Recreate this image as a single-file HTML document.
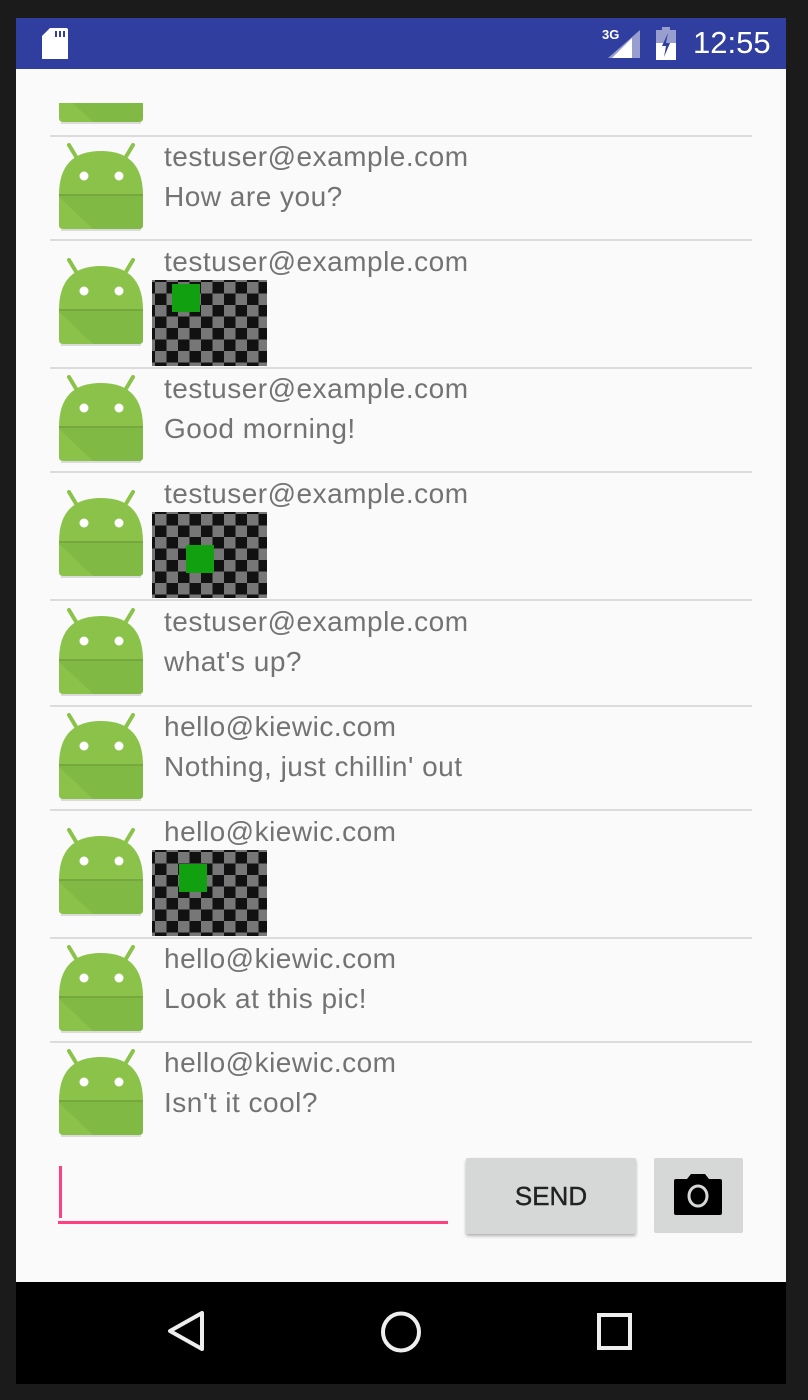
<!DOCTYPE html>
<html><head><meta charset="utf-8"><style>
*{margin:0;padding:0;box-sizing:border-box}
body{width:808px;height:1400px;background:#1b1b1b;position:relative;overflow:hidden;font-family:"Liberation Sans",sans-serif}
.screen{position:absolute;left:16px;top:18px;width:770px;height:1366px;background:#fafafa;overflow:hidden}
.status{position:absolute;left:0;top:0;width:770px;height:51px;background:#303f9f}
.nav{position:absolute;left:0;top:1264px;width:770px;height:102px;background:#000}
.list{position:absolute;left:0;top:85px;width:770px;height:1060px;overflow:hidden}
.av{position:absolute;left:43px;width:84px;height:88px}
.div{position:absolute;left:34px;width:702px;height:2px;background:#dcdcdc}
.t{position:absolute;left:148px;font-size:28px;letter-spacing:0.5px;color:#737373;white-space:nowrap;line-height:30px}
.img{position:absolute;left:136px;width:115px;height:86px;background-color:#777;
background-image:conic-gradient(#111 0 25%,#777 0 50%,#111 0 75%,#777 0);background-size:23px 23px;background-position:3px 2px}
.g{position:absolute;width:28px;height:28px;background:#10a010}
</style></head><body>
<svg width="0" height="0" style="position:absolute"><defs>
<g id="andy">
<path d="M10 2 L19 17" stroke="#8bc34a" stroke-width="4" stroke-linecap="round"/>
<path d="M74 2 L65 17" stroke="#8bc34a" stroke-width="4" stroke-linecap="round"/>
<path d="M0 52 Q0 8 42 8 Q84 8 84 52 L84 82 Q84 86 80 86 L4 86 Q0 86 0 82 Z" fill="#8bc34a"/>
<path d="M0 52 L84 52 L84 82 Q84 86 80 86 L34 86 L0 54 Z" fill="#7cb342" opacity="0.6"/>
<rect x="0" y="51" width="84" height="2" fill="#76a83e"/>
<circle cx="25" cy="33" r="4.5" fill="#fff"/><circle cx="60" cy="33" r="4.5" fill="#fff"/>
<rect x="2" y="86" width="80" height="2" fill="#000" opacity="0.12"/>
</g></defs></svg>
<div class="screen">
<div class="status">
<svg style="position:absolute;left:26px;top:10px" width="26" height="31"><path d="M8 0 H24 Q26 0 26 2 V31 H0 V8 Z" fill="#fff"/><rect x="13" y="3" width="2" height="6" fill="#303f9f"/><rect x="17" y="3" width="2" height="6" fill="#303f9f"/><rect x="21" y="3" width="2" height="6" fill="#303f9f"/></svg>
<div style="position:absolute;left:586px;top:9px;color:#fff;font-size:13px;font-weight:bold">3G</div>
<svg style="position:absolute;left:592px;top:12px" width="32" height="28"><path d="M32 0 V28 H0 Z" fill="#fff" opacity="0.5"/><path d="M24 8 V28 H4 Z" fill="#fff"/></svg>
<svg style="position:absolute;left:640px;top:9px" width="20" height="33"><rect x="6" y="0" width="8" height="3" fill="#fff" opacity=".5"/><rect x="0" y="3" width="20" height="30" fill="#fff" opacity=".5"/><rect x="0" y="16" width="20" height="17" fill="#fff"/><path d="M12 6 L6 19 H10 L8 30 L14 16 H10 Z" fill="#303f9f"/></svg>
<div style="position:absolute;left:677px;top:7px;color:#fff;font-size:31px">12:55</div>
</div>
<div class="list">
<svg class="av" style="top:-67px" viewBox="0 0 84 88"><use href="#andy"/></svg>
<div class="div" style="top:32px"></div>
<svg class="av" style="top:40px"><use href="#andy"/></svg>
<div class="t" style="top:39px">testuser@example.com</div>
<div class="t" style="top:79px">How are you?</div>
<div class="div" style="top:136px"></div>
<svg class="av" style="top:155px"><use href="#andy"/></svg>
<div class="t" style="top:144px">testuser@example.com</div>
<div class="img" style="top:177px"><div class="g" style="left:20px;top:4px"></div></div>
<div class="div" style="top:264px"></div>
<svg class="av" style="top:272px"><use href="#andy"/></svg>
<div class="t" style="top:271px">testuser@example.com</div>
<div class="t" style="top:311px">Good morning!</div>
<div class="div" style="top:368px"></div>
<svg class="av" style="top:387px"><use href="#andy"/></svg>
<div class="t" style="top:376px">testuser@example.com</div>
<div class="img" style="top:409px"><div class="g" style="left:34px;top:33px"></div></div>
<div class="div" style="top:496px"></div>
<svg class="av" style="top:505px"><use href="#andy"/></svg>
<div class="t" style="top:504px">testuser@example.com</div>
<div class="t" style="top:544px">what's up?</div>
<div class="div" style="top:602px"></div>
<svg class="av" style="top:610px"><use href="#andy"/></svg>
<div class="t" style="top:609px">hello@kiewic.com</div>
<div class="t" style="top:649px">Nothing, just chillin' out</div>
<div class="div" style="top:706px"></div>
<svg class="av" style="top:725px"><use href="#andy"/></svg>
<div class="t" style="top:714px">hello@kiewic.com</div>
<div class="img" style="top:747px"><div class="g" style="left:27px;top:14px"></div></div>
<div class="div" style="top:834px"></div>
<svg class="av" style="top:842px"><use href="#andy"/></svg>
<div class="t" style="top:841px">hello@kiewic.com</div>
<div class="t" style="top:881px">Look at this pic!</div>
<div class="div" style="top:938px"></div>
<svg class="av" style="top:946px"><use href="#andy"/></svg>
<div class="t" style="top:945px">hello@kiewic.com</div>
<div class="t" style="top:985px">Isn't it cool?</div>
</div>
<div style="position:absolute;left:43px;top:1148px;width:3px;height:52px;background:#ff4081"></div>
<div style="position:absolute;left:42px;top:1203px;width:390px;height:3px;background:#ff4081"></div>
<div style="position:absolute;left:450px;top:1140px;width:170px;height:76px;background:#d6d7d7;border-radius:2px;box-shadow:0 2px 3px rgba(0,0,0,.3);text-align:center;line-height:76px;font-size:26px;color:#222;-webkit-text-stroke:0.4px #222">SEND</div>
<div style="position:absolute;left:638px;top:1140px;width:89px;height:75px;background:#d6d7d7;border-radius:2px"></div>
<svg style="position:absolute;left:658px;top:1155px" width="48" height="42"><path d="M0 8 Q0 6 2 6 H13 L17 1 H31 L35 6 H46 Q48 6 48 8 V40 Q48 42 46 42 H2 Q0 42 0 40 Z" fill="#000"/><ellipse cx="24" cy="23" rx="9" ry="10" fill="none" stroke="#d6d7d7" stroke-width="3"/></svg>
<div class="nav">
<svg style="position:absolute;left:150px;top:28px" width="40" height="42"><path d="M36 3 V39 L4 21 Z" fill="none" stroke="#eee" stroke-width="4" stroke-linejoin="round"/></svg>
<svg style="position:absolute;left:362px;top:28px" width="46" height="44"><ellipse cx="23" cy="22" rx="18" ry="18.5" fill="none" stroke="#eee" stroke-width="4"/></svg>
<svg style="position:absolute;left:580px;top:30px" width="38" height="40"><rect x="3" y="3" width="31" height="33" fill="none" stroke="#eee" stroke-width="4"/></svg>
</div>
</div>
</body></html>
